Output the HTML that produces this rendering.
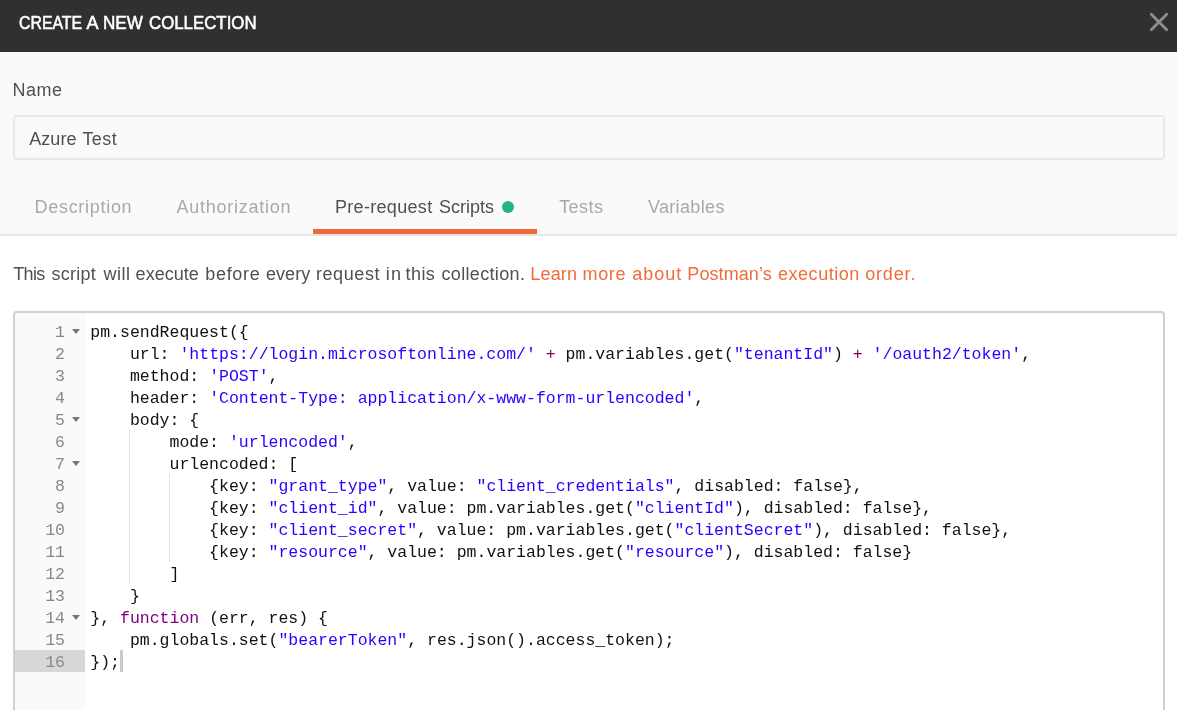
<!DOCTYPE html>
<html lang="en">
<head>
<meta charset="utf-8">
<title>Create a new collection</title>
<style>
*{box-sizing:border-box;margin:0;padding:0}
html,body{width:1177px;height:710px;overflow:hidden;background:#fafafa;font-family:"Liberation Sans",sans-serif}
.abs{position:absolute;white-space:nowrap;will-change:transform}
.w{left:0;width:1177px;height:24px;font-size:18px;line-height:24px}
.w span{position:absolute;top:0}
#hdr{left:0;top:0;width:1177px;height:52px;background:#303030}
#title{left:0;top:11px;font-size:18px;line-height:24px;color:#fff;-webkit-text-stroke:.55px #fff}
#title span{position:absolute;top:0;transform-origin:0 0}
#w1{left:18.6px;transform:scaleX(.88)}#w2{left:86.6px;transform:scaleX(1)}#w3{left:103.4px;transform:scaleX(.95)}#w4{left:148.5px;transform:scaleX(.935)}
#close{left:1147px;top:10px;width:24px;height:24px}
#lblname{top:78px;color:#505050}
#inp{left:13px;top:115px;width:1152px;height:45px;border:2px solid #e8e8e8;border-radius:4px;background:#fafafa}
#inpval{top:127px;color:#505050}
.tab{top:195px;color:#a9a9a9}
#t3{color:#505050}
#dot{left:502px;top:201px;width:12px;height:12px;border-radius:50%;background:#26b47f}
#tabul{left:313px;top:229px;width:224px;height:5px;background:#f0693a}
#tabline{left:0;top:234px;width:1177px;height:2px;background:#e6e6e6}
#pane{left:0;top:236px;width:1177px;height:474px;background:#fff}
#dg{top:262px;color:#505050}
#do{top:262px;color:#f26b3a}
#ed{left:13px;top:311px;width:1152px;height:410px;border:2px solid #d0d0d0;border-radius:4px;background:#fff;overflow:hidden}
#gut{left:0;top:0;width:70px;height:410px;background:#fafafa}
#actg{left:0;top:337px;width:70px;height:22px;background:#d8d8d8}
.ln{position:absolute;left:0;width:50px;text-align:right;font-family:"Liberation Mono",monospace;font-size:16.5px;line-height:22px;height:22px;color:#888}
.fold{position:absolute;left:57px;width:0;height:0;border-left:4px solid transparent;border-right:4px solid transparent;border-top:5px solid #777}
pre{position:absolute;left:75.3px;top:9px;font-family:"Liberation Mono",monospace;font-size:16.5px;line-height:22px;color:#111}
.s{color:#2a00ff}.k{color:#800080}.o{color:#7f0055}
.guide{position:absolute;width:1px;background-image:linear-gradient(#c6c6c6 50%,transparent 50%);background-size:1px 2px}
#cursor{position:absolute;left:105px;top:337px;width:3px;height:22px;background:#c9c9c9}
</style>
</head>
<body>
<div class="abs" id="hdr"></div>
<div class="abs" id="title"><span id="w1">CREATE</span> <span id="w2">A</span> <span id="w3">NEW</span> <span id="w4">COLLECTION</span></div>
<svg class="abs" id="close" viewBox="0 0 24 24"><path d="M4.3 4.3 L19.7 19.7 M19.7 4.3 L4.3 19.7" stroke="#8f8f8f" stroke-width="2.8" stroke-linecap="round" fill="none"/></svg>
<div class="abs w" id="lblname"><span style="left:12.5px;letter-spacing:0.499px">Name</span></div>
<div class="abs" id="inp"></div>
<div class="abs w" id="inpval"><span style="left:29.2px;letter-spacing:0.072px">Azure</span> <span style="left:82.4px;letter-spacing:0.463px">Test</span></div>
<div class="abs tab w" id="t1"><span style="left:34.5px;letter-spacing:0.708px">Description</span></div>
<div class="abs tab w" id="t2"><span style="left:176.6px;letter-spacing:0.737px">Authorization</span></div>
<div class="abs tab w" id="t3"><span style="left:334.9px;letter-spacing:0.326px">Pre-request</span> <span style="left:438.9px;letter-spacing:-0.002px">Scripts</span></div>
<div class="abs" id="dot"></div>
<div class="abs tab w" id="t4"><span style="left:559.2px;letter-spacing:0.422px">Tests</span></div>
<div class="abs tab w" id="t5"><span style="left:647.9px;letter-spacing:0.349px">Variables</span></div>
<div class="abs" id="tabul"></div>
<div class="abs" id="tabline"></div>
<div class="abs" id="pane"></div>
<div class="abs w" id="dg"><span style="left:13.3px;letter-spacing:-0.668px">This</span> <span style="left:51.6px;letter-spacing:0.239px">script</span> <span style="left:103.6px;letter-spacing:0.434px">will</span> <span style="left:135.6px;letter-spacing:0.028px">execute</span> <span style="left:205.2px;letter-spacing:0.715px">before</span> <span style="left:266px;letter-spacing:0.046px">every</span> <span style="left:315.9px;letter-spacing:0.594px">request</span> <span style="left:385.7px;letter-spacing:1.201px">in</span> <span style="left:405.6px;letter-spacing:0.396px">this</span> <span style="left:441.5px;letter-spacing:0.336px">collection.</span></div>
<div class="abs w" id="do"><span style="left:530.2px;letter-spacing:0.218px">Learn</span> <span style="left:582.6px;letter-spacing:0.6px">more</span> <span style="left:632.2px;letter-spacing:0.989px">about</span> <span style="left:687.3px;letter-spacing:0.087px">Postman’s</span> <span style="left:778px;letter-spacing:0.532px">execution</span> <span style="left:865.2px;letter-spacing:0.835px">order.</span></div>
<div class="abs" id="ed">
<div class="abs" id="gut"></div>
<div class="abs" id="actg"></div>
<div id="lns">
<div class="ln" style="top:9px">1</div>
<div class="fold" style="top:16px"></div>
<div class="ln" style="top:31px">2</div>
<div class="ln" style="top:53px">3</div>
<div class="ln" style="top:75px">4</div>
<div class="ln" style="top:97px">5</div>
<div class="fold" style="top:104px"></div>
<div class="ln" style="top:119px">6</div>
<div class="ln" style="top:141px">7</div>
<div class="fold" style="top:148px"></div>
<div class="ln" style="top:163px">8</div>
<div class="ln" style="top:185px">9</div>
<div class="ln" style="top:207px">10</div>
<div class="ln" style="top:229px">11</div>
<div class="ln" style="top:251px">12</div>
<div class="ln" style="top:273px">13</div>
<div class="ln" style="top:295px">14</div>
<div class="fold" style="top:302px"></div>
<div class="ln" style="top:317px">15</div>
<div class="ln" style="top:339px">16</div>
</div>
<pre>pm.sendRequest({
    url: <span class="s">'https://login.microsoftonline.com/'</span> <span class="o">+</span> pm.variables.get(<span class="s">"tenantId"</span>) <span class="o">+</span> <span class="s">'/oauth2/token'</span>,
    method: <span class="s">'POST'</span>,
    header: <span class="s">'Content-Type: application/x-www-form-urlencoded'</span>,
    body: {
        mode: <span class="s">'urlencoded'</span>,
        urlencoded: [
            {key: <span class="s">"grant_type"</span>, value: <span class="s">"client_credentials"</span>, disabled: false},
            {key: <span class="s">"client_id"</span>, value: pm.variables.get(<span class="s">"clientId"</span>), disabled: false},
            {key: <span class="s">"client_secret"</span>, value: pm.variables.get(<span class="s">"clientSecret"</span>), disabled: false},
            {key: <span class="s">"resource"</span>, value: pm.variables.get(<span class="s">"resource"</span>), disabled: false}
        ]
    }
}, <span class="k">function</span> (err, res) {
    pm.globals.set(<span class="s">"bearerToken"</span>, res.json().access_token);
});</pre>
<div id="cursor"></div>
<div class="guide" style="left:114px;top:117px;height:154px"></div>
<div class="guide" style="left:154px;top:161px;height:88px"></div>
</div>
</body>
</html>
